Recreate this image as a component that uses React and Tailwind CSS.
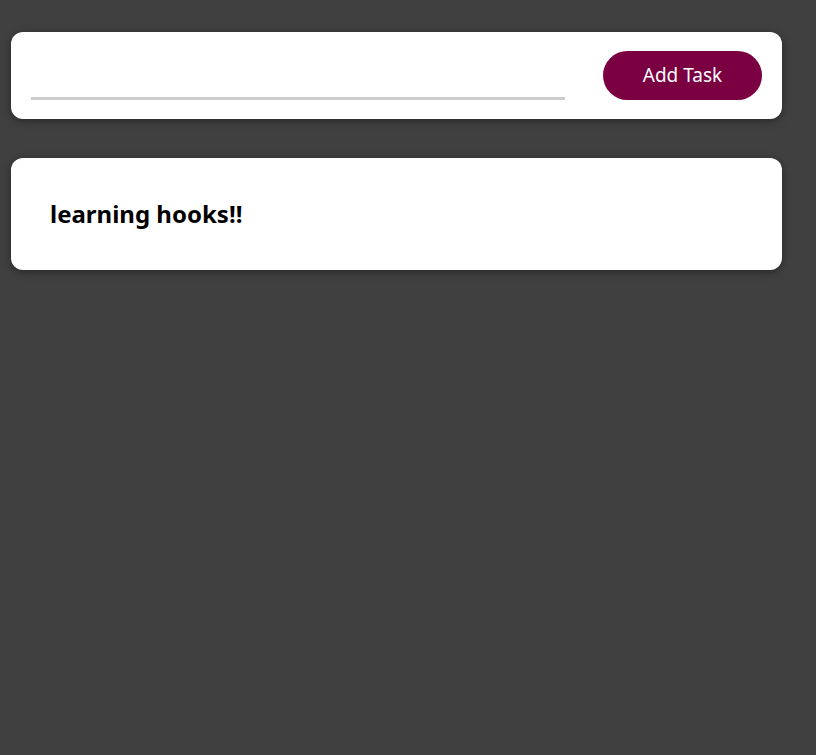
import React from "react";

export default function App() {
  return (
    <div
      className="min-h-screen bg-[#404040] px-[11px] pt-8 pr-[34px]"
      style={{ fontFamily: '"Noto Sans", "Open Sans", sans-serif' }}
    >
      {/* Input card */}
      <div className="bg-white rounded-xl shadow-[0_2px_8px_rgba(0,0,0,0.4)] h-[87px] flex items-center justify-between px-5">
        <input
          type="text"
          className="w-[534px] mt-[26px] border-0 border-b-[3px] border-solid border-[#cccccc] outline-none h-[22px]"
        />
        <button className="w-[159px] h-[49px] rounded-full bg-[#7a0042] text-white text-[19px]">
          Add Task
        </button>
      </div>

      {/* Task card */}
      <div className="bg-white rounded-xl shadow-[0_2px_8px_rgba(0,0,0,0.4)] h-[112px] mt-[39px] flex items-center px-[39px]">
        <h2 className="text-[24px] font-bold text-black">learning hooks!!</h2>
      </div>
    </div>
  );
}
